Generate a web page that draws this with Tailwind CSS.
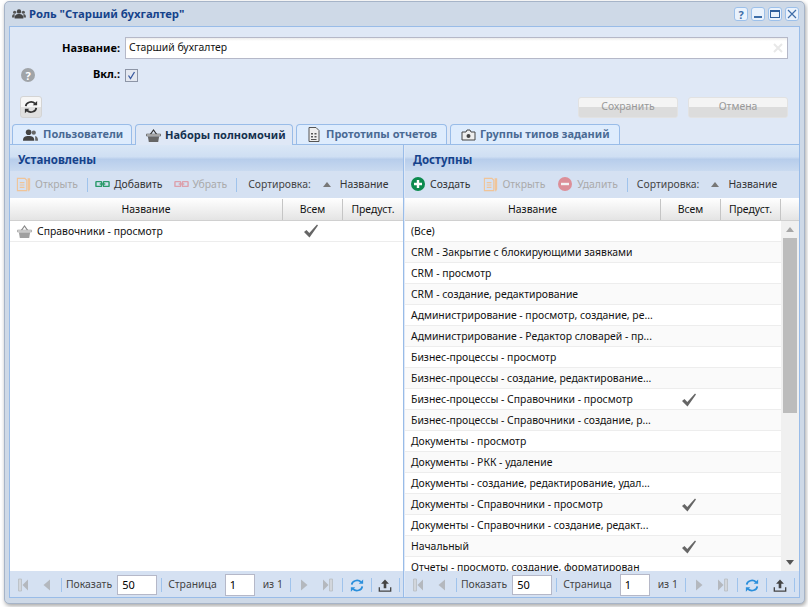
<!DOCTYPE html>
<html lang="ru">
<head>
<meta charset="UTF-8">
<title>Роль "Старший бухгалтер"</title>
<script src="https://cdn.jsdelivr.net/npm/@tailwindcss/browser@4"></script>
</head>
<body class="w-[808px] h-[607px] overflow-hidden bg-white font-['Noto_Sans','Liberation_Sans',sans-serif] text-[10.4px] text-[#111]">

<svg class="hidden">
  <symbol id="basket" viewBox="0 0 16 16"><path d="M4.500 7l3.500-5 3.500 5" fill="none" stroke="#888" stroke-width="1.200"/><path d="M.5 6.500h15v2H.5z" fill="#e4e4e4" stroke="#888" stroke-width=".6"/><path d="M2 9h12l-1 6H3z" fill="#a0a0a0"/></symbol>
  <symbol id="check" viewBox="0 0 16 16"><path d="M1 9l2.500-2 2.800 3L14 1.500l1 1L6.500 14.500z" fill="#666"/></symbol>
  <symbol id="doc" viewBox="0 0 16 16" fill="none" stroke="#f0c498" stroke-width="1.200"><path d="M1.500 1.500h8l2 2v11h-10z"/><path d="M4 6h5M4 8.500h5M4 11h5"/><path d="M13 2h1.500v11l-.8 1.500-.7-1.500z" fill="#f0c498"/></symbol>
  <symbol id="link" viewBox="0 0 16 10" fill="none" stroke-width="1.500"><rect x="1" y="2.500" width="6" height="5" rx=".5"/><rect x="9" y="2.500" width="6" height="5" rx=".5"/><path d="M5 5h6"/></symbol>
  <symbol id="first" viewBox="0 0 10 14"><path d="M.5 1h3v12h-3z" fill="#d2d6dc" stroke="#b8bcc2" stroke-width=".8"/><path d="M10 1.500v11L4.500 7z" fill="#b4b8be"/></symbol>
  <symbol id="prev" viewBox="0 0 7 14"><path d="M7 1.500v11L.5 7z" fill="#b4b8be"/></symbol>
  <symbol id="next" viewBox="0 0 7 14"><path d="M0 1.500v11L6.500 7z" fill="#b4b8be"/></symbol>
  <symbol id="last" viewBox="0 0 10 14"><path d="M6.500 1h3v12h-3z" fill="#d2d6dc" stroke="#b8bcc2" stroke-width=".8"/><path d="M0 1.500v11L5.500 7z" fill="#b4b8be"/></symbol>
  <symbol id="reload" viewBox="0 0 16 16" fill="none" stroke="#2a8fdc" stroke-width="2"><path d="M2 7a6 5 0 0 1 10.500-3"/><path d="M14 9a6 5 0 0 1-10.500 3"/><path d="M15 1v5h-5z" fill="#2a8fdc" stroke="none"/><path d="M1 15v-5h5z" fill="#2a8fdc" stroke="none"/></symbol>
  <symbol id="export" viewBox="0 0 16 16"><path d="M8 1l4.500 5H9.500v5h-3V6H3.500z" fill="#444"/><path d="M1.500 10v4.500h13V10" fill="none" stroke="#444" stroke-width="1.500"/></symbol>
</svg>

<div class="w-[801px] h-[603px] ml-[4px] mt-[1px] flex flex-col bg-[#ced9e7] border border-[#a6b4c8] rounded-[5px] shadow-[1px_2px_4px_rgba(0,0,0,0.35)] px-[4px] pb-[5px]">

  <!-- title bar -->
  <div class="h-[24px] shrink-0 flex items-center pl-[3px] pr-[1px]">
    <svg class="w-[14px] h-[12px] mr-[3px]" viewBox="0 0 16 12"><circle cx="8" cy="3" r="2.500" fill="#444"/><path d="M3 11c0-4 2-5 5-5s5 1 5 5z" fill="#444"/><circle cx="3" cy="4" r="1.800" fill="#555"/><circle cx="13" cy="4" r="1.800" fill="#555"/><path d="M0 10c0-3 1-4 3-4v4zM16 10c0-3-1-4-3-4v4z" fill="#555"/></svg>
    <span class="font-bold text-[11.3px] text-[#15428b]">Роль "Старший бухгалтер"</span>
    <div class="ml-auto flex gap-[3px]">
      <div class="w-[14px] h-[14px] rounded-[3px] border border-[#9cc0ea] bg-[#eaf2fc] flex items-center justify-center text-[11px] font-bold text-[#3f6ea8] leading-none">?</div>
      <div class="w-[14px] h-[14px] rounded-[3px] border border-[#9cc0ea] bg-[#eaf2fc] flex items-end justify-center pb-[2px]"><div class="w-[8px] h-[2px] bg-[#3f6ea8]"></div></div>
      <div class="w-[14px] h-[14px] rounded-[3px] border border-[#9cc0ea] bg-[#eaf2fc] flex items-center justify-center"><div class="w-[10px] h-[8px] border border-t-2 border-[#2f5f9c]"></div></div>
      <div class="w-[14px] h-[14px] rounded-[3px] border border-[#9cc0ea] bg-[#eaf2fc] flex items-center justify-center"><svg class="w-[10px] h-[10px]" viewBox="0 0 10 10"><path d="M1 1l8 8M9 1l-8 8" stroke="#3f6ea8" stroke-width="1.200"/></svg></div>
    </div>
  </div>

  <!-- body -->
  <div class="flex-1 min-h-0 flex flex-col bg-[#dfe8f6] border border-[#99bce8]">

    <!-- form -->
    <div class="h-[97px] shrink-0 flex flex-col">
      <div class="flex items-center mt-[10px] h-[22px]">
        <label class="w-[110px] text-right font-bold text-[11px] text-black">Название:</label>
        <div class="ml-[5px] w-[663px] h-[22px] bg-white border border-[#b5b8c8] flex items-center pl-[3px] bg-gradient-to-b from-[#ececec] from-0% to-white to-[15%]">Старший бухгалтер<svg class="ml-auto mr-[4px] w-[10px] h-[10px]" viewBox="0 0 10 10"><path d="M1 1l8 8M9 1l-8 8" stroke="#e8e8e8" stroke-width="2"/></svg></div>
      </div>
      <div class="flex items-center mt-[8px] h-[16px]">
        <div class="ml-[11px] w-[14px] h-[14px] rounded-full bg-[#a0a4a8] text-white font-bold text-[11px] leading-none flex items-center justify-center">?</div>
        <label class="w-[85px] text-right font-bold text-[11px] text-black -mt-[2px]">Вкл.:</label>
        <div class="ml-[5px] w-[13px] h-[13px] border border-[#8d95a6] bg-[#e4e8f0] flex items-center justify-center"><svg class="w-[9px] h-[9px]" viewBox="0 0 9 9"><path d="M1.500 4.500l2 3 4-6.500" fill="none" stroke="#3a5aa0" stroke-width="1.300"/></svg></div>
      </div>
      <div class="flex items-center mt-[13px] h-[22px]">
        <div class="ml-[10px] w-[22px] h-[22px] rounded-[3px] border border-[#d4d4d4] bg-[linear-gradient(#f6f6f6_50%,#e0e0e0_50%)] flex items-center justify-center">
          <svg class="w-[14px] h-[14px]" viewBox="0 0 16 16" fill="none" stroke="#333" stroke-width="2"><path d="M2 7a6 5 0 0 1 10.500-3"/><path d="M14 9a6 5 0 0 1-10.500 3"/><path d="M15 1v5h-5z" fill="#333" stroke="none"/><path d="M1 15v-5h5z" fill="#333" stroke="none"/></svg>
        </div>
        <div class="ml-auto w-[100px] h-[21px] rounded-[3px] border border-[#e2e2e2] bg-[linear-gradient(#f4f4f4_50%,#dcdcdc_50%)] flex items-center justify-center text-[#999]">Сохранить</div>
        <div class="ml-[10px] mr-[11px] w-[100px] h-[21px] rounded-[3px] border border-[#e2e2e2] bg-[linear-gradient(#f4f4f4_50%,#dcdcdc_50%)] flex items-center justify-center text-[#999]">Отмена</div>
      </div>
    </div>

    <!-- tabs -->
    <div class="h-[21px] shrink-0 flex items-end pl-[2px] gap-[3px] border-b border-[#99bce8] font-bold text-[11px] text-[#4a6a94]">
      <div class="w-[120px] h-[20px] rounded-t-[4px] border border-b-0 border-[#99bce8] bg-[#deecfd] flex items-center pl-[10px] gap-[5px]">
        <svg class="w-[15px] h-[12px]" viewBox="0 0 16 12"><circle cx="6" cy="3" r="3" fill="#444"/><path d="M0 12c0-4 2-5 6-5s6 1 6 5z" fill="#444"/><circle cx="11.500" cy="3.500" r="2.200" fill="#666"/><path d="M13 7c2 .5 3 2 3 5h-3z" fill="#666"/></svg>
        Пользователи
      </div>
      <div class="w-[158px] h-[21px] -mb-px rounded-t-[4px] border border-b-0 border-[#99bce8] bg-[#dfe8f6] flex items-center pl-[10px] gap-[4px] text-[#15314f] relative">
        <svg class="w-[15px] h-[15px]" viewBox="0 0 16 16"><path d="M4.500 7l3.500-5 3.500 5" fill="none" stroke="#333" stroke-width="1.200"/><path d="M.5 6.500h15v2H.5z" fill="#ddd" stroke="#444" stroke-width=".7"/><path d="M2 9h12l-1 6H3z" fill="#666"/></svg>
        Наборы полномочий
      </div>
      <div class="w-[151px] h-[20px] rounded-t-[4px] border border-b-0 border-[#99bce8] bg-[#deecfd] flex items-center pl-[11px] gap-[6px]">
        <svg class="w-[12px] h-[15px]" viewBox="0 0 12 15"><path d="M1 .5h7l3 3v11H1z" fill="#eee" stroke="#555"/><path d="M3 6h2v1.500H3zM6.500 6h2v1.500h-2zM3 9h2v1.500H3zM6.500 9h2v1.500h-2zM3 12h5.500v1H3z" fill="#555"/></svg>
        Прототипы отчетов
      </div>
      <div class="w-[170px] h-[20px] rounded-t-[4px] border border-b-0 border-[#99bce8] bg-[#deecfd] flex items-center pl-[10px] gap-[4px]">
        <svg class="w-[15px] h-[12px]" viewBox="0 0 15 12"><path d="M1 3h4l1-2h3l1 2h4v8H1z" fill="#eee" stroke="#444"/><circle cx="7.500" cy="7" r="2" fill="#444"/></svg>
        Группы типов заданий
      </div>
    </div>

    <!-- two grids -->
    <div class="flex-1 min-h-0 flex">

      <!-- installed -->
      <section class="w-[394px] shrink-0 flex flex-col border-r border-[#99bce8]">
        <div class="h-[26px] shrink-0 flex items-center pl-[8px] pt-[4px] bg-[linear-gradient(#dae7f6_0%,#cfdff3_45%,#b7cdeb_55%,#c9daf0_100%)] font-bold text-[11.5px] text-[#15428b]">Установлены</div>
        <div class="h-[27px] shrink-0 flex items-center pl-[6px] bg-[#d5e1f2] text-[#333] whitespace-nowrap">
          <span class="flex items-center gap-[4px] text-[#aaa]"><svg class="w-[15px] h-[15px]"><use href="#doc"/></svg>Открыть</span>
          <span class="w-px h-[14px] bg-[#9fc3ec] ml-[9px] mr-[7px]"></span>
          <span class="flex items-center gap-[4px]"><svg class="w-[15px] h-[10px]" stroke="#2a9a6a"><use href="#link"/></svg>Добавить</span>
          <span class="ml-[11px] flex items-center gap-[4px] text-[#aaa]"><svg class="w-[15px] h-[10px]" stroke="#dca0ac"><use href="#link"/></svg>Убрать</span>
          <span class="w-px h-[14px] bg-[#9fc3ec] ml-[9px] mr-[11px]"></span>
          <span class="text-[#444]">Сортировка:</span>
          <svg class="w-[8px] h-[5px] ml-[12px] mr-[9px]" viewBox="0 0 8 5"><path d="M4 0l4 5H0z" fill="#777"/></svg>
          <span class="text-[#333]">Название</span>
        </div>
        <div class="h-[23px] pt-[1px] shrink-0 flex bg-gradient-to-b from-white to-[#e4e4e4] border-b border-[#d0d0d0] text-center items-stretch">
          <div class="w-[273px] flex items-center justify-center border-r border-[#c5c5c5]">Название</div>
          <div class="w-[60px] flex items-center justify-center border-r border-[#c5c5c5]">Всем</div>
          <div class="w-[60px] flex items-center justify-center">Предуст.</div>
        </div>
        <div class="flex-1 min-h-0 bg-white">
          <div class="h-[21px] flex items-center border-b border-[#ededed]">
            <svg class="ml-[7px] w-[15px] h-[15px]"><use href="#basket"/></svg>
            <span class="ml-[5px] w-[246px] pt-[1px]">Справочники - просмотр</span>
            <svg class="ml-[20px] w-[16px] h-[16px]"><use href="#check"/></svg>
          </div>
        </div>
        <div class="h-[26px] pt-[2px] shrink-0 flex items-center bg-[#d5e1f2] pl-[8px] text-[#444] whitespace-nowrap">
          <svg class="w-[10px] h-[14px]"><use href="#first"/></svg>
          <svg class="ml-[15px] w-[7px] h-[14px]"><use href="#prev"/></svg>
          <span class="w-px h-[14px] bg-[#9fc3ec] ml-[11px] mr-[4px]"></span>
          Показать
          <div class="ml-[5px] w-[40px] h-[20px] bg-white border border-[#b5b8c8] flex items-center pl-[4px] text-[11px] text-black">50</div>
          <span class="w-px h-[14px] bg-[#9fc3ec] ml-[4px] mr-[6px]"></span>
          Страница
          <div class="ml-[8px] w-[30px] h-[22px] bg-white border border-[#b5b8c8] flex items-center pl-[4px] text-[11px] text-black">1</div>
          <span class="ml-[8px]">из 1</span>
          <span class="w-px h-[14px] bg-[#9fc3ec] ml-[7px] mr-[10px]"></span>
          <svg class="w-[7px] h-[14px]"><use href="#next"/></svg>
          <svg class="ml-[15px] w-[10px] h-[14px]"><use href="#last"/></svg>
          <span class="w-px h-[14px] bg-[#9fc3ec] ml-[9px] mr-[7px]"></span>
          <svg class="w-[14px] h-[15px]"><use href="#reload"/></svg>
          <span class="w-px h-[14px] bg-[#9fc3ec] ml-[7px] mr-[6px]"></span>
          <svg class="w-[14px] h-[15px]"><use href="#export"/></svg>
          <span class="w-px h-[14px] bg-[#9fc3ec] ml-[7px]"></span>
        </div>
      </section>

      <div class="w-px shrink-0 bg-[#dfe8f6]"></div>

      <!-- available -->
      <section class="flex-1 min-w-0 flex flex-col">
        <div class="h-[26px] shrink-0 flex items-center pl-[8px] pt-[4px] bg-[linear-gradient(#dae7f6_0%,#cfdff3_45%,#b7cdeb_55%,#c9daf0_100%)] font-bold text-[11.5px] text-[#15428b]">Доступны</div>
        <div class="h-[27px] shrink-0 flex items-center pl-[6px] bg-[#d5e1f2] text-[#333] whitespace-nowrap">
          <span class="flex items-center gap-[5px]"><svg class="w-[14px] h-[14px]" viewBox="0 0 14 14"><circle cx="7" cy="7" r="7" fill="#0c8a4e"/><path d="M3 5.800h2.800V3h2.400v2.800H11v2.400H8.200V11H5.800V8.200H3z" fill="#fff"/></svg>Создать</span>
          <span class="ml-[13px] flex items-center gap-[4px] text-[#aaa]"><svg class="w-[15px] h-[15px]"><use href="#doc"/></svg>Открыть</span>
          <span class="ml-[13px] flex items-center gap-[5px] text-[#aaa]"><svg class="w-[14px] h-[14px]" viewBox="0 0 14 14"><circle cx="7" cy="7" r="7" fill="#dc8f98"/><path d="M3 5.800h8v2.400H3z" fill="#f4f4f4"/></svg>Удалить</span>
          <span class="w-px h-[14px] bg-[#9fc3ec] ml-[9px] mr-[9px]"></span>
          <span class="text-[#444]">Сортировка:</span>
          <svg class="w-[8px] h-[5px] ml-[12px] mr-[9px]" viewBox="0 0 8 5"><path d="M4 0l4 5H0z" fill="#777"/></svg>
          <span class="text-[#333]">Название</span>
        </div>
        <div class="h-[23px] pt-[1px] shrink-0 flex bg-gradient-to-b from-white to-[#e4e4e4] border-b border-[#d0d0d0] items-stretch">
          <div class="w-[256px] flex items-center justify-center border-r border-[#c5c5c5]">Название</div>
          <div class="w-[60px] flex items-center justify-center border-r border-[#c5c5c5]">Всем</div>
          <div class="w-[60px] flex items-center justify-center border-r border-[#c5c5c5]">Предуст.</div>
        </div>
        <div class="flex-1 min-h-0 flex bg-white">
          <div class="w-[376px] overflow-hidden whitespace-nowrap">
            <div class="h-[21px] flex items-center pl-[6px] pt-[1px] border-b border-[#ededed]">(Все)</div>
            <div class="h-[21px] flex items-center pl-[6px] pt-[1px] border-b border-[#ededed] bg-[#fafafa]">CRM - Закрытие с блокирующими заявками</div>
            <div class="h-[21px] flex items-center pl-[6px] pt-[1px] border-b border-[#ededed]">CRM - просмотр</div>
            <div class="h-[21px] flex items-center pl-[6px] pt-[1px] border-b border-[#ededed] bg-[#fafafa]">CRM - создание, редактирование</div>
            <div class="h-[21px] flex items-center pl-[6px] pt-[1px] border-b border-[#ededed]">Администрирование - просмотр, создание, ре...</div>
            <div class="h-[21px] flex items-center pl-[6px] pt-[1px] border-b border-[#ededed] bg-[#fafafa]">Администрирование - Редактор словарей - пр...</div>
            <div class="h-[21px] flex items-center pl-[6px] pt-[1px] border-b border-[#ededed]">Бизнес-процессы - просмотр</div>
            <div class="h-[21px] flex items-center pl-[6px] pt-[1px] border-b border-[#ededed] bg-[#fafafa]">Бизнес-процессы - создание, редактирование...</div>
            <div class="h-[21px] flex items-center pl-[6px] pt-[1px] border-b border-[#ededed]"><span class="w-[270px]">Бизнес-процессы - Справочники - просмотр</span><svg class="w-[16px] h-[16px]"><use href="#check"/></svg></div>
            <div class="h-[21px] flex items-center pl-[6px] pt-[1px] border-b border-[#ededed] bg-[#fafafa]">Бизнес-процессы - Справочники - создание, р...</div>
            <div class="h-[21px] flex items-center pl-[6px] pt-[1px] border-b border-[#ededed]">Документы - просмотр</div>
            <div class="h-[21px] flex items-center pl-[6px] pt-[1px] border-b border-[#ededed] bg-[#fafafa]">Документы - РКК - удаление</div>
            <div class="h-[21px] flex items-center pl-[6px] pt-[1px] border-b border-[#ededed]">Документы - создание, редактирование, удал...</div>
            <div class="h-[21px] flex items-center pl-[6px] pt-[1px] border-b border-[#ededed] bg-[#fafafa]"><span class="w-[270px]">Документы - Справочники - просмотр</span><svg class="w-[16px] h-[16px]"><use href="#check"/></svg></div>
            <div class="h-[21px] flex items-center pl-[6px] pt-[1px] border-b border-[#ededed]">Документы - Справочники - создание, редакт...</div>
            <div class="h-[21px] flex items-center pl-[6px] pt-[1px] border-b border-[#ededed] bg-[#fafafa]"><span class="w-[270px]">Начальный</span><svg class="w-[16px] h-[16px]"><use href="#check"/></svg></div>
            <div class="h-[21px] flex items-center pl-[6px] pt-[1px]">Отчеты - просмотр, создание, форматирован</div>
          </div>
          <div class="flex-1 flex flex-col items-center bg-[#f0f0f0]">
            <svg class="mt-[6px] w-[8px] h-[5px]" viewBox="0 0 8 5"><path d="M4 0l4 5H0z" fill="#a6a6a6"/></svg>
            <div class="mt-[6px] w-[14px] h-[175px] bg-[#bcbcbc]"></div>
            <svg class="mt-auto mb-[6px] w-[8px] h-[5px]" viewBox="0 0 8 5"><path d="M4 5l4-5H0z" fill="#555"/></svg>
          </div>
        </div>
        <div class="h-[26px] pt-[2px] shrink-0 flex items-center bg-[#d5e1f2] pl-[8px] text-[#444] whitespace-nowrap">
          <svg class="w-[10px] h-[14px]"><use href="#first"/></svg>
          <svg class="ml-[15px] w-[7px] h-[14px]"><use href="#prev"/></svg>
          <span class="w-px h-[14px] bg-[#9fc3ec] ml-[11px] mr-[4px]"></span>
          Показать
          <div class="ml-[5px] w-[40px] h-[20px] bg-white border border-[#b5b8c8] flex items-center pl-[4px] text-[11px] text-black">50</div>
          <span class="w-px h-[14px] bg-[#9fc3ec] ml-[4px] mr-[6px]"></span>
          Страница
          <div class="ml-[8px] w-[30px] h-[22px] bg-white border border-[#b5b8c8] flex items-center pl-[4px] text-[11px] text-black">1</div>
          <span class="ml-[8px]">из 1</span>
          <span class="w-px h-[14px] bg-[#9fc3ec] ml-[7px] mr-[10px]"></span>
          <svg class="w-[7px] h-[14px]"><use href="#next"/></svg>
          <svg class="ml-[15px] w-[10px] h-[14px]"><use href="#last"/></svg>
          <span class="w-px h-[14px] bg-[#9fc3ec] ml-[9px] mr-[7px]"></span>
          <svg class="w-[14px] h-[15px]"><use href="#reload"/></svg>
          <span class="w-px h-[14px] bg-[#9fc3ec] ml-[7px] mr-[6px]"></span>
          <svg class="w-[14px] h-[15px]"><use href="#export"/></svg>
          <span class="w-px h-[14px] bg-[#9fc3ec] ml-[7px]"></span>
        </div>
      </section>
    </div>
  </div>
</div>
</body>
</html>
